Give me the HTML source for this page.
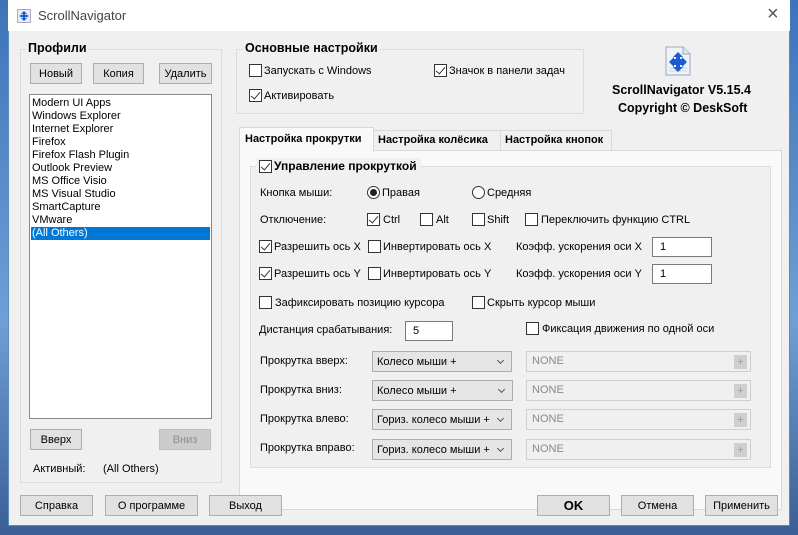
<!DOCTYPE html>
<html><head><meta charset="utf-8"><style>
*{box-sizing:border-box;margin:0;padding:0}
body{width:798px;height:535px;position:relative;overflow:hidden;background:linear-gradient(180deg,#3d74b8,#6f9fd6 60%,#3a5f95);font-family:"Liberation Sans","DejaVu Sans",sans-serif;font-size:11px;color:#000}
.a{position:absolute;white-space:nowrap}
.win{position:absolute;left:8px;top:0;width:782px;height:526px;background:#f0f0f0;border:1px solid #5a8ac6}
.title{position:absolute;left:8px;top:0;width:782px;height:31px;background:#fff}
.grp{position:absolute;border:1px solid #dcdcdc}
.gt{position:absolute;background:#f0f0f0;font-weight:bold;font-size:12.5px;padding:0 2px}
.btn{position:absolute;background:#e1e1e1;border:1px solid #adadad;text-align:center;font-size:11px;line-height:21px}
.cb{position:absolute;width:13px;height:13px;border:1px solid #333;background:#fff}
.cb.c::after{content:"";position:absolute;left:3px;top:0px;width:4px;height:8px;border:solid #333;border-width:0 1.3px 1.3px 0;transform:rotate(40deg)}
.rb{position:absolute;width:13px;height:13px;border:1px solid #333;border-radius:50%;background:#fff}
.rb.c::after{content:"";position:absolute;left:2px;top:2px;width:7px;height:7px;border-radius:50%;background:#222}
.inp{position:absolute;background:#fff;border:1px solid #7a7a7a;padding-left:7px;line-height:19px}
.cmb{position:absolute;background:#e5e5e5;border:1px solid #adadad;padding-left:4px;line-height:21px}
.cmb::after{content:"";position:absolute;right:8px;top:6px;width:4px;height:4px;border:solid #555;border-width:0 1px 1px 0;transform:rotate(45deg)}
.none{position:absolute;background:#f0f0f0;border:1px solid #cfcfcf;color:#8a8a8a;padding-left:5px;line-height:19px;font-size:11px}
.none::after{content:"+";position:absolute;right:3px;top:3px;width:13px;height:14px;background:#cfcfcf;color:#999;line-height:14px;text-align:center;font-size:11px}
</style></head><body>
<div class="win"></div>
<div class="title"></div>
<svg class="a" style="left:17px;top:9px" width="14" height="14" viewBox="0 0 14 14"><rect x="0.5" y="0.5" width="13" height="13" fill="#e8eef8" stroke="#aab"/><path d="M7 2L10 5H8V6H9V5.5L12 7 9 8.5V8H8V9H10L7 12 4 9H6V8H5V8.5L2 7 5 5.5V6H6V5H4Z" fill="#1d5bd0"/></svg>
<div class="a" style="left:38px;top:8px;font-size:13px;color:#444">ScrollNavigator</div>
<div class="a" style="left:767px;top:3px;font-size:20px;color:#555;font-weight:200">×</div>

<div class="grp" style="left:20px;top:49px;width:202px;height:434px"></div>
<div class="gt" style="left:26px;top:41px">Профили</div>
<div class="btn" style="left:30px;top:63px;width:52px;height:21px">Новый</div>
<div class="btn" style="left:93px;top:63px;width:51px;height:21px">Копия</div>
<div class="btn" style="left:159px;top:63px;width:53px;height:21px">Удалить</div>
<div class="a" style="left:29px;top:94px;width:183px;height:325px;background:#fff;border:1px solid #828790"></div>
<div class="a" style="left:32px;top:97px;line-height:13px;font-size:11px">Modern UI Apps<br>Windows Explorer<br>Internet Explorer<br>Firefox<br>Firefox Flash Plugin<br>Outlook Preview<br>MS Office Visio<br>MS Visual Studio<br>SmartCapture<br>VMware</div>
<div class="a" style="left:31px;top:227px;width:179px;height:13px;background:#0078d7;color:#fff;line-height:13px;padding-left:1px">(All Others)</div>
<div class="btn" style="left:30px;top:429px;width:52px;height:21px">Вверх</div>
<div class="btn" style="left:159px;top:429px;width:52px;height:21px;background:#ccc;border-color:#bfbfbf;color:#8d8d8d">Вниз</div>
<div class="a" style="left:33px;top:463px">Активный:</div>
<div class="a" style="left:103px;top:463px">(All Others)</div>

<div class="grp" style="left:236px;top:49px;width:348px;height:65px"></div>
<div class="gt" style="left:243px;top:41px">Основные настройки</div>
<div class="cb" style="left:249px;top:64px"></div><div class="a" style="left:264px;top:65px">Запускать с Windows</div>
<div class="cb c" style="left:249px;top:89px"></div><div class="a" style="left:264px;top:90px">Активировать</div>
<div class="cb c" style="left:434px;top:64px"></div><div class="a" style="left:449px;top:65px">Значок в панели задач</div>

<svg class="a" style="left:665px;top:46px" width="26" height="30" viewBox="0 0 26 30"><path d="M1 1H18L25 8V29H1Z" fill="#eef3fa" stroke="#9aa8bd"/><path d="M18 1V8H25" fill="#dde5f0" stroke="#9aa8bd"/><g stroke="#c8d3e3"><line x1="4" y1="22" x2="22" y2="22"/><line x1="4" y1="25" x2="22" y2="25"/></g><path d="M13 6L18 11H15V13H17V11L22 16 17 21V19H15V21H18L13 26 8 21H11V19H9V21L4 16 9 11V13H11V11H8Z" fill="#1d5bd0"/></svg>
<div class="a" style="left:612px;top:83px;font-weight:bold;font-size:12.5px">ScrollNavigator V5.15.4</div>
<div class="a" style="left:618px;top:101px;font-weight:bold;font-size:12.5px">Copyright © DeskSoft</div>

<div class="a" style="left:239px;top:150px;width:543px;height:360px;background:#f9f9f9;border:1px solid #d9d9d9"></div>
<div class="a" style="left:373px;top:130px;width:128px;height:21px;background:#f0f0f0;border:1px solid #d9d9d9;font-weight:bold;padding-left:4px;line-height:19px">Настройка колёсика</div>
<div class="a" style="left:500px;top:130px;width:112px;height:21px;background:#f0f0f0;border:1px solid #d9d9d9;font-weight:bold;padding-left:4px;line-height:19px">Настройка кнопок</div>
<div class="a" style="left:239px;top:127px;width:135px;height:25px;background:#f9f9f9;border:1px solid #d9d9d9;border-bottom:none;font-weight:bold;padding-left:5px;line-height:22px">Настройка прокрутки</div>

<div class="a" style="left:250px;top:166px;width:521px;height:302px;background:#f0f0f0;border:1px solid #dcdcdc"></div>
<div class="a" style="left:256px;top:158px;background:#f0f0f0;width:165px;height:16px"></div>
<div class="cb c" style="left:259px;top:160px"></div><div class="a" style="left:274px;top:159px;font-weight:bold;font-size:12px">Управление прокруткой</div>

<div class="a" style="left:260px;top:187px">Кнопка мыши:</div>
<div class="rb c" style="left:367px;top:186px"></div><div class="a" style="left:382px;top:187px">Правая</div>
<div class="rb" style="left:472px;top:186px"></div><div class="a" style="left:487px;top:187px">Средняя</div>

<div class="a" style="left:260px;top:214px">Отключение:</div>
<div class="cb c" style="left:367px;top:213px"></div><div class="a" style="left:383px;top:214px">Ctrl</div>
<div class="cb" style="left:420px;top:213px"></div><div class="a" style="left:436px;top:214px">Alt</div>
<div class="cb" style="left:472px;top:213px"></div><div class="a" style="left:487px;top:214px">Shift</div>
<div class="cb" style="left:525px;top:213px"></div><div class="a" style="left:541px;top:214px">Переключить функцию CTRL</div>

<div class="cb c" style="left:259px;top:240px"></div><div class="a" style="left:274px;top:241px">Разрешить ось X</div>
<div class="cb" style="left:368px;top:240px"></div><div class="a" style="left:383px;top:241px">Инвертировать ось X</div>
<div class="a" style="left:516px;top:241px">Коэфф. ускорения оси X</div>
<div class="inp" style="left:652px;top:237px;width:60px;height:20px">1</div>

<div class="cb c" style="left:259px;top:267px"></div><div class="a" style="left:274px;top:268px">Разрешить ось Y</div>
<div class="cb" style="left:368px;top:267px"></div><div class="a" style="left:383px;top:268px">Инвертировать ось Y</div>
<div class="a" style="left:516px;top:268px">Коэфф. ускорения оси Y</div>
<div class="inp" style="left:652px;top:264px;width:60px;height:20px">1</div>

<div class="cb" style="left:259px;top:296px"></div><div class="a" style="left:275px;top:297px">Зафиксировать позицию курсора</div>
<div class="cb" style="left:472px;top:296px"></div><div class="a" style="left:487px;top:297px">Скрыть курсор мыши</div>

<div class="a" style="left:259px;top:324px">Дистанция срабатывания:</div>
<div class="inp" style="left:405px;top:321px;width:48px;height:20px">5</div>
<div class="cb" style="left:526px;top:322px"></div><div class="a" style="left:542px;top:323px">Фиксация движения по одной оси</div>

<div class="a" style="left:260px;top:355px">Прокрутка вверх:</div>
<div class="cmb" style="left:372px;top:351px;width:140px;height:21px">Колесо мыши +</div>
<div class="none" style="left:526px;top:351px;width:225px;height:21px">NONE</div>
<div class="a" style="left:260px;top:384px">Прокрутка вниз:</div>
<div class="cmb" style="left:372px;top:380px;width:141px;height:21px">Колесо мыши +</div>
<div class="none" style="left:526px;top:380px;width:225px;height:21px">NONE</div>
<div class="a" style="left:260px;top:413px">Прокрутка влево:</div>
<div class="cmb" style="left:372px;top:409px;width:140px;height:21px">Гориз. колесо мыши +</div>
<div class="none" style="left:526px;top:409px;width:225px;height:21px">NONE</div>
<div class="a" style="left:260px;top:442px">Прокрутка вправо:</div>
<div class="cmb" style="left:372px;top:439px;width:140px;height:21px">Гориз. колесо мыши +</div>
<div class="none" style="left:526px;top:439px;width:225px;height:21px">NONE</div>

<div class="btn" style="left:20px;top:495px;width:73px;height:21px">Справка</div>
<div class="btn" style="left:105px;top:495px;width:93px;height:21px">О программе</div>
<div class="btn" style="left:209px;top:495px;width:73px;height:21px">Выход</div>
<div class="btn" style="left:537px;top:495px;width:73px;height:21px;font-weight:bold;font-size:13px;line-height:19px">OK</div>
<div class="btn" style="left:621px;top:495px;width:73px;height:21px">Отмена</div>
<div class="btn" style="left:705px;top:495px;width:73px;height:21px">Применить</div>
</body></html>
